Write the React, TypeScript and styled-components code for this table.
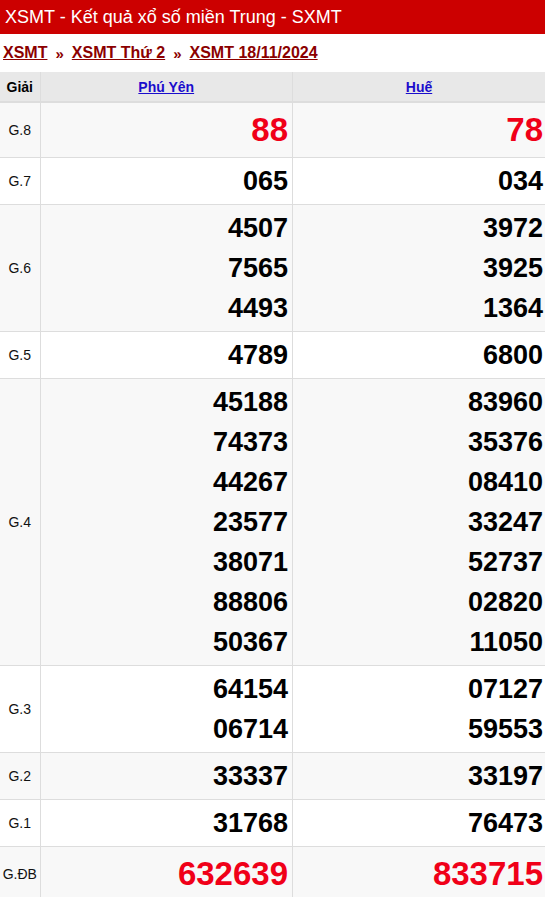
import { createGlobalStyle } from "styled-components";
import styled from "styled-components";

const Global = createGlobalStyle`
  body {
    margin: 0;
    font-family: "Liberation Sans", Arial, sans-serif;
    background: #fff;
  }
`;

const TopBar = styled.h1`
  margin: 0;
  height: 34px;
  padding: 0 5px;
  display: flex;
  align-items: center;
  background: #cc0000;
  color: #fff;
  font-size: 18px;
  font-weight: normal;
`;

const Crumbs = styled.div`
  height: 38px;
  padding: 0 3px;
  display: flex;
  align-items: center;
  gap: 8px;
  font-size: 16px;
  font-weight: bold;
  color: #8b0000;

  span {
    font-size: 15px;
  }

  a {
    color: #8b0000;
    text-decoration: underline;
  }
`;

const Table = styled.table`
  width: 100%;
  border-collapse: collapse;
  table-layout: fixed;

  td,
  th {
    border: 1px solid #ddd;
  }
  tr:first-child th {
    border-top: 0;
  }
  td:first-child,
  th:first-child {
    border-left: 0;
  }
  td:last-child,
  th:last-child {
    border-right: 0;
  }
`;

const Head = styled.th`
  height: 29px;
  padding: 0;
  background: #e8e8e8;
  border-bottom: 2px solid #ddd !important;
  font-size: 14px;
  color: #000;

  a {
    color: #1a0dcc;
  }
`;

const Row = styled.tr<{ $shade: boolean }>`
  background: ${(p) => (p.$shade ? "#f8f8f8" : "#fff")};
`;

const Label = styled.td`
  padding: 0;
  text-align: center;
  font-size: 14px;
  color: #111;
  white-space: nowrap;
`;

const Cell = styled.td`
  padding: 3px 4px 3px 0;
  text-align: right;
  vertical-align: middle;

  &:last-child {
    padding-right: 2px;
  }
`;

const Num = styled.div<{ $big?: boolean; $red?: boolean }>`
  font-size: ${(p) => (p.$big ? "33px" : "27px")};
  line-height: ${(p) => (p.$big ? "48px" : "40px")};
  font-weight: bold;
  color: ${(p) => (p.$red ? "#f00018" : "#000")};
`;

type Prize = { label: string; a: string[]; b: string[]; special?: boolean };

const prizes: Prize[] = [
  { label: "G.8", a: ["88"], b: ["78"], special: true },
  { label: "G.7", a: ["065"], b: ["034"] },
  { label: "G.6", a: ["4507", "7565", "4493"], b: ["3972", "3925", "1364"] },
  { label: "G.5", a: ["4789"], b: ["6800"] },
  {
    label: "G.4",
    a: ["45188", "74373", "44267", "23577", "38071", "88806", "50367"],
    b: ["83960", "35376", "08410", "33247", "52737", "02820", "11050"],
  },
  { label: "G.3", a: ["64154", "06714"], b: ["07127", "59553"] },
  { label: "G.2", a: ["33337"], b: ["33197"] },
  { label: "G.1", a: ["31768"], b: ["76473"] },
  { label: "G.ĐB", a: ["632639"], b: ["833715"], special: true },
];

export default function App() {
  return (
    <>
      <Global />
      <TopBar>XSMT - Kết quả xổ số miền Trung - SXMT</TopBar>
      <Crumbs>
        <a href="#">XSMT</a>
        <span>»</span>
        <a href="#">XSMT Thứ 2</a>
        <span>»</span>
        <a href="#">XSMT 18/11/2024</a>
      </Crumbs>
      <Table>
        <colgroup>
          <col style={{ width: 40 }} />
          <col />
          <col />
        </colgroup>
        <thead>
          <tr>
            <Head>Giải</Head>
            <Head>
              <a href="#">Phú Yên</a>
            </Head>
            <Head>
              <a href="#">Huế</a>
            </Head>
          </tr>
        </thead>
        <tbody>
          {prizes.map((p, i) => (
            <Row key={p.label} $shade={i % 2 === 0}>
              <Label>{p.label}</Label>
              <Cell>
                {p.a.map((n) => (
                  <Num key={n} $big={p.special} $red={p.special}>
                    {n}
                  </Num>
                ))}
              </Cell>
              <Cell>
                {p.b.map((n) => (
                  <Num key={n} $big={p.special} $red={p.special}>
                    {n}
                  </Num>
                ))}
              </Cell>
            </Row>
          ))}
        </tbody>
      </Table>
    </>
  );
}
